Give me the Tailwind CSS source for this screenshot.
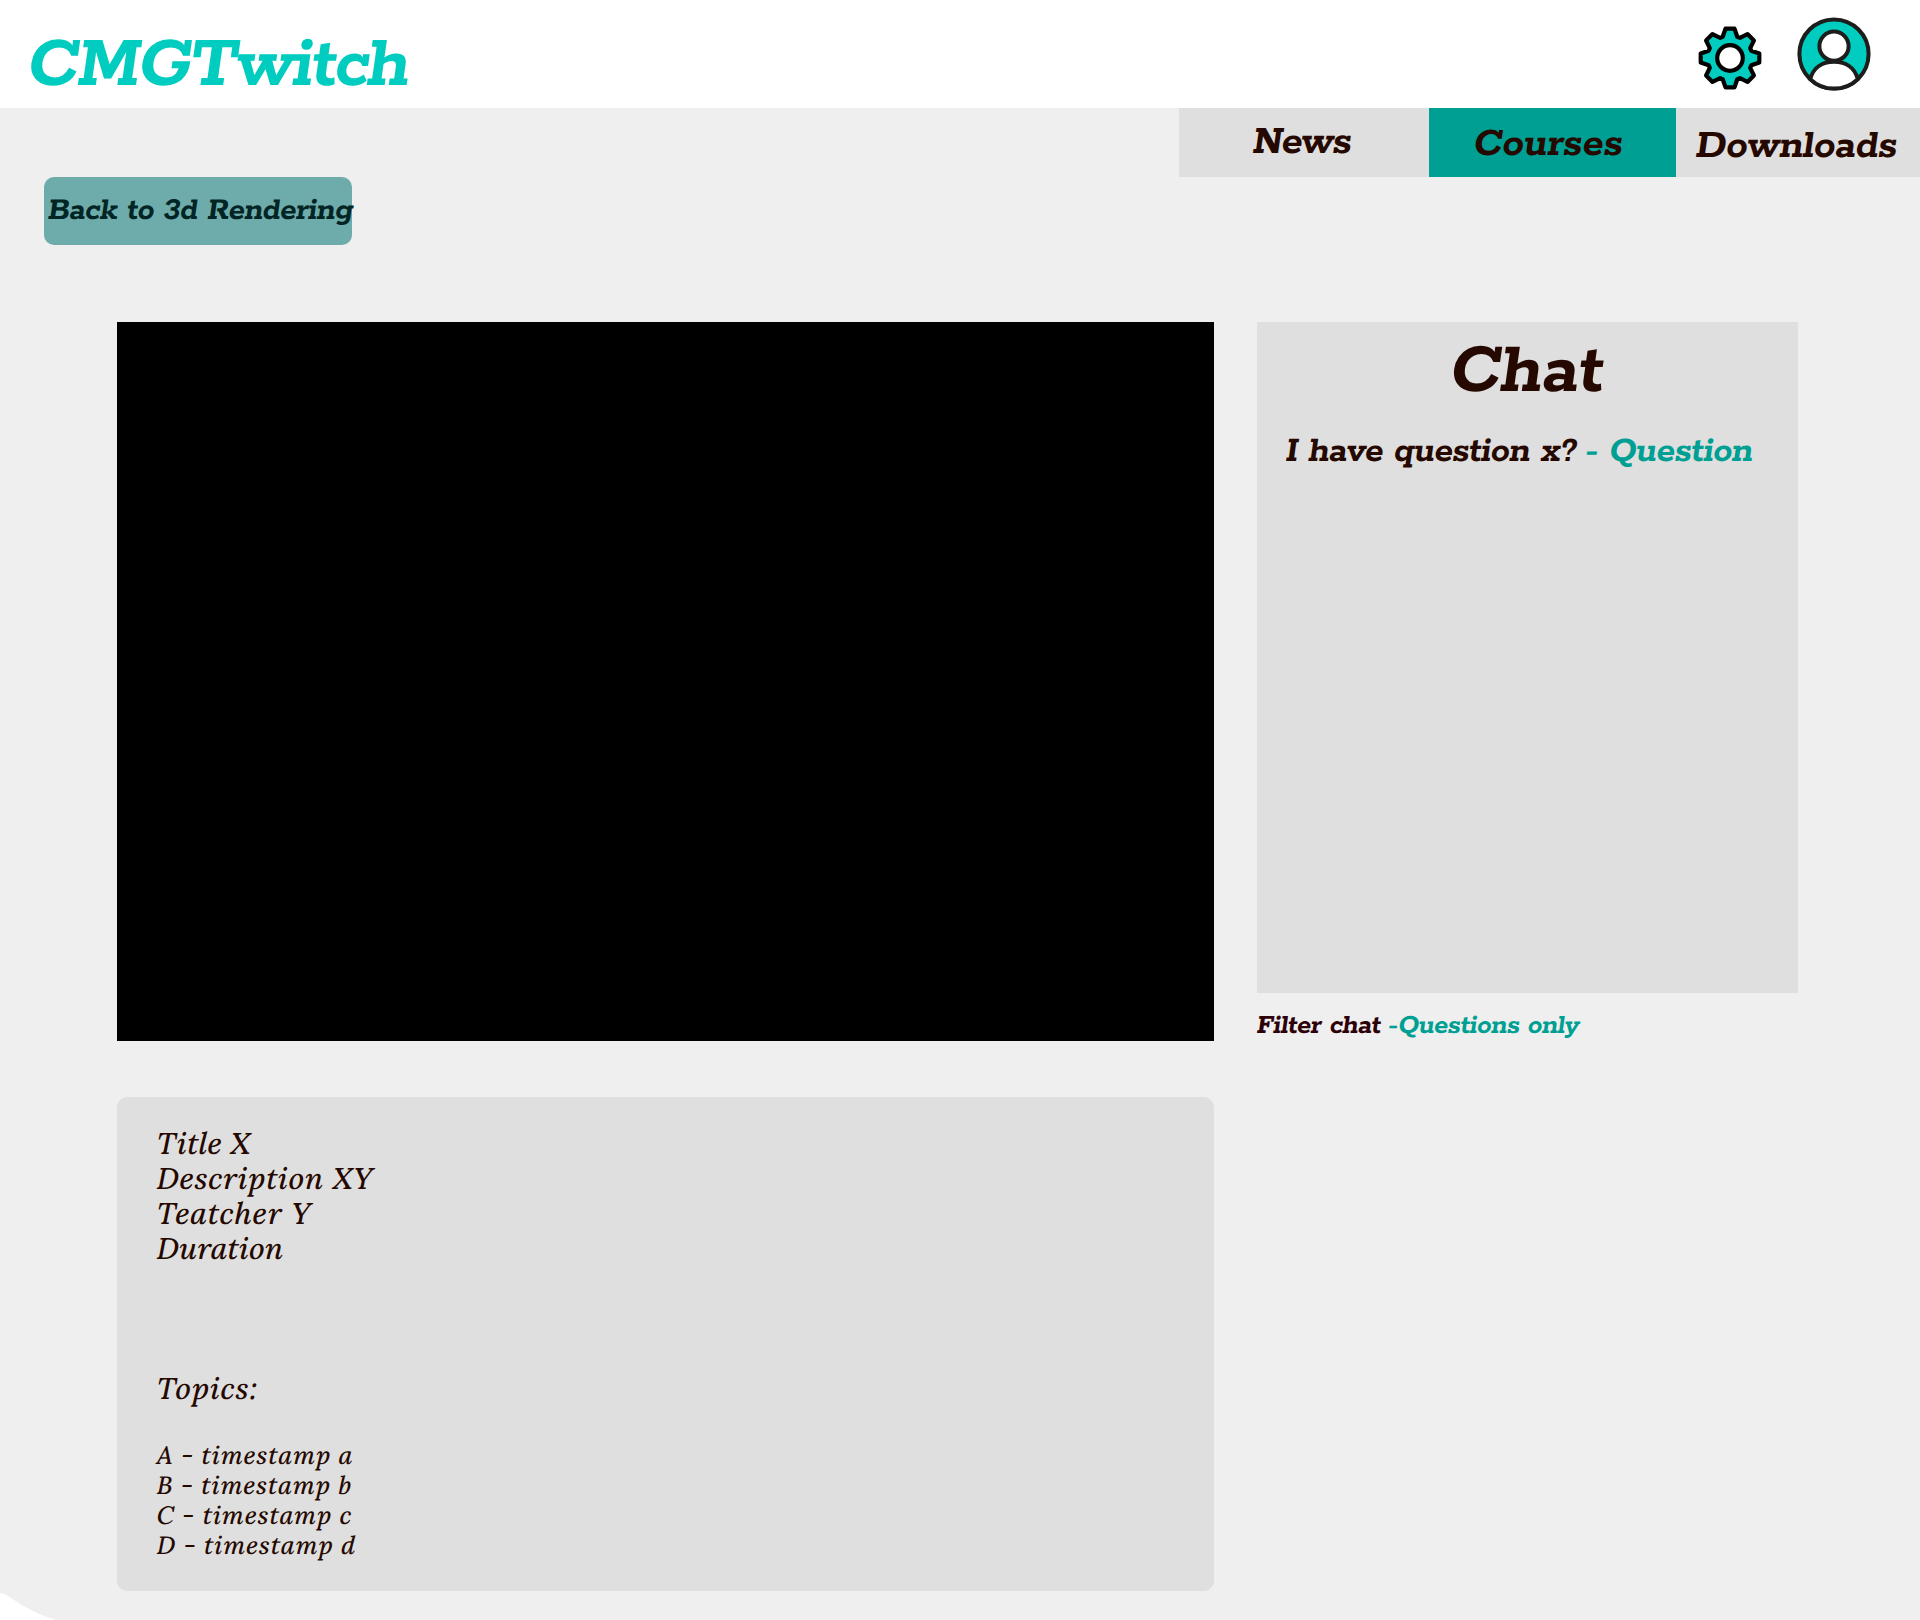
<!DOCTYPE html>
<html lang="en">
<head>
<meta charset="utf-8">
<title>CMGTwitch</title>
<script src="https://cdn.jsdelivr.net/npm/@tailwindcss/browser@4"></script>
</head>
<body class="relative h-[1620px] w-[1920px] overflow-hidden bg-[#efefef] font-['Rokkitt','DejaVu_Serif_Condensed',serif] font-bold text-[#250900]">
  <header class="flex h-[108px] items-start justify-between bg-white pr-[48px] pl-[28px]">
    <h1 class="mt-[28px] -skew-x-8 text-[77px] leading-none tracking-[-2.1px] text-[#00cdbf]">CMGTwitch</h1>
    <div class="flex gap-[34px]">
      <svg class="mt-[26px] h-16 w-16" viewBox="-32 -32 64 64" stroke="#000" stroke-width="4.2" stroke-linejoin="round">
        <path fill="#00cdbf" d="M-7.3-21.3L-4.5-29.3L4.5-29.3L7.3-21.3L9.9-20.2L17.5-23.9L23.9-17.5L20.2-9.9L21.3-7.3L29.3-4.5L29.3 4.5L21.3 7.3L20.2 9.9L23.9 17.5L17.5 23.9L9.9 20.2L7.3 21.3L4.5 29.3L-4.5 29.3L-7.3 21.3L-9.9 20.2L-17.5 23.9L-23.9 17.5L-20.2 9.9L-21.3 7.3L-29.3 4.5L-29.3-4.5L-21.3-7.3L-20.2-9.9L-23.9-17.5L-17.5-23.9L-9.9-20.2Z"/>
        <circle r="12.8" fill="#fff"/>
      </svg>
      <svg class="mt-[16px] h-[76px] w-[76px]" viewBox="-38 -38 76 76" stroke="#1d1d1b" stroke-width="4">
        <circle r="34.6" fill="#00cdbf"/>
        <path fill="#fff" d="M-23.8 25.1C-20.5 13-11 7.8 0 7.8S20.5 13 23.8 25.1A34.6 34.6 0 0 1-23.8 25.1Z"/>
        <circle cy="-7.8" r="14.6" fill="#fff"/>
      </svg>
    </div>
  </header>

  <nav class="ml-auto flex h-[69px] w-[741px] bg-[#dfdfdf] text-[43px] leading-none">
    <a class="flex w-[250px] items-center pl-[74px]"><span class="-skew-x-8 tracking-[-1.4px]">News</span></a>
    <a class="flex w-[247px] items-center bg-[#009f93] pt-[4px] pl-[45px]"><span class="-skew-x-8 tracking-[0.1px]">Courses</span></a>
    <a class="flex flex-1 items-center pt-[8px] pl-[20px]"><span class="-skew-x-8 tracking-[-0.4px]">Downloads</span></a>
  </nav>

  <a class="ml-[44px] flex h-[68px] w-[308px] items-center rounded-[10px] bg-[#6eabab] pt-[2px] pl-[4px] text-[33.5px] leading-none tracking-[-0.4px] whitespace-nowrap text-[#002524]"><span class="-skew-x-8">Back to 3d Rendering</span></a>

  <main class="mt-[77px] ml-[117px] flex gap-[43px]">
    <div class="w-[1097px]">
      <div class="h-[719px] bg-black"></div>
      <section class="mt-[56px] h-[494px] rounded-[10px] bg-[#dfdfdf] pt-[29px] pl-[40px] font-['Lora','DejaVu_Serif',serif] font-medium italic">
        <div class="flex flex-col items-start text-[30px] leading-[35px]">
          <p class="-skew-x-8 tracking-[0.3px]">Title X</p>
          <p class="-skew-x-8 tracking-[0.7px]">Description XY</p>
          <p class="-skew-x-8 tracking-[0.85px]">Teatcher Y</p>
          <p class="-skew-x-8 tracking-[0.25px]">Duration</p>
          <h2 class="mt-[105px] -skew-x-8 tracking-[0.9px]">Topics:</h2>
        </div>
        <ul class="mt-[34px] flex flex-col items-start text-[25px] leading-[30px] tracking-[0.9px]">
          <li class="-skew-x-8">A - timestamp a</li>
          <li class="-skew-x-8">B - timestamp b</li>
          <li class="-skew-x-8">C - timestamp c</li>
          <li class="-skew-x-8">D - timestamp d</li>
        </ul>
      </section>
    </div>
    <aside class="w-[541px]">
      <section class="h-[671px] bg-[#dfdfdf] pt-[12px]">
        <h2 class="-skew-x-8 text-center text-[76px] leading-none tracking-[-0.3px]">Chat</h2>
        <p class="mt-[23px] flex pl-[29px] text-[38px] leading-none whitespace-nowrap"><span class="-skew-x-8 tracking-[-0.5px]">I have question x?</span><span class="ml-[8px] -skew-x-8 tracking-[-0.4px] text-[#009f93]">- Question</span></p>
      </section>
      <p class="mt-[18px] flex text-[29px] leading-none tracking-[-0.4px] whitespace-nowrap text-[#2d0008]"><span class="-skew-x-8">Filter chat</span><span class="ml-[7px] -skew-x-8 text-[#009f93]">-Questions only</span></p>
    </aside>
  </main>

  <svg class="absolute bottom-0 left-0 h-[27px] w-[56px]" viewBox="0 0 56 27"><path fill="#fff" d="M0 0Q4 0 8 3Q32 20 56 27H0Z"/></svg>
</body>
</html>
